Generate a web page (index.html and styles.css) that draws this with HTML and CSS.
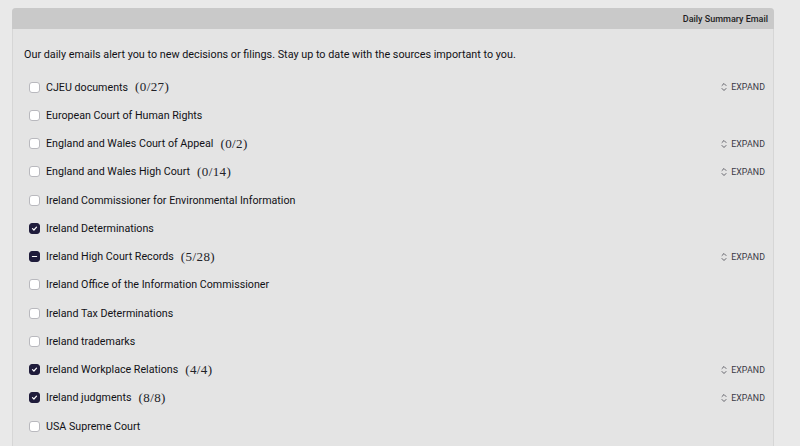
FILE: index.html
```html
<!DOCTYPE html>
<html lang="en">
<head>
<meta charset="utf-8">
<title>Daily Summary Email</title>
<link rel="stylesheet" href="styles.css">
</head>
<body>
<section class="panel">
  <header class="panel-head">Daily Summary Email</header>
  <div class="panel-body">
    <p class="intro">Our daily emails alert you to new decisions or filings. Stay up to date with the sources important to you.</p>
    <ul class="sources">
      <li class="row"><span class="box"></span><span class="label">CJEU documents</span><span class="count">(0/27)</span><span class="expand"><svg viewBox="0 0 6 10" class="sel"><path d="M1 3.5 L3 1.5 L5 3.5 M1 6.5 L3 8.5 L5 6.5"/></svg>EXPAND</span></li>
      <li class="row"><span class="box"></span><span class="label">European Court of Human Rights</span></li>
      <li class="row"><span class="box"></span><span class="label">England and Wales Court of Appeal</span><span class="count">(0/2)</span><span class="expand"><svg viewBox="0 0 6 10" class="sel"><path d="M1 3.5 L3 1.5 L5 3.5 M1 6.5 L3 8.5 L5 6.5"/></svg>EXPAND</span></li>
      <li class="row"><span class="box"></span><span class="label">England and Wales High Court</span><span class="count">(0/14)</span><span class="expand"><svg viewBox="0 0 6 10" class="sel"><path d="M1 3.5 L3 1.5 L5 3.5 M1 6.5 L3 8.5 L5 6.5"/></svg>EXPAND</span></li>
      <li class="row"><span class="box"></span><span class="label">Ireland Commissioner for Environmental Information</span></li>
      <li class="row"><span class="box checked"><svg viewBox="0 0 12 12"><path d="M3.3 6.2 L5.2 8 L8.7 4.2"/></svg></span><span class="label">Ireland Determinations</span></li>
      <li class="row"><span class="box checked"><svg viewBox="0 0 12 12"><path d="M3.2 6 L8.8 6"/></svg></span><span class="label">Ireland High Court Records</span><span class="count">(5/28)</span><span class="expand"><svg viewBox="0 0 6 10" class="sel"><path d="M1 3.5 L3 1.5 L5 3.5 M1 6.5 L3 8.5 L5 6.5"/></svg>EXPAND</span></li>
      <li class="row"><span class="box"></span><span class="label">Ireland Office of the Information Commissioner</span></li>
      <li class="row"><span class="box"></span><span class="label">Ireland Tax Determinations</span></li>
      <li class="row"><span class="box"></span><span class="label">Ireland trademarks</span></li>
      <li class="row"><span class="box checked"><svg viewBox="0 0 12 12"><path d="M3.3 6.2 L5.2 8 L8.7 4.2"/></svg></span><span class="label">Ireland Workplace Relations</span><span class="count">(4/4)</span><span class="expand"><svg viewBox="0 0 6 10" class="sel"><path d="M1 3.5 L3 1.5 L5 3.5 M1 6.5 L3 8.5 L5 6.5"/></svg>EXPAND</span></li>
      <li class="row"><span class="box checked"><svg viewBox="0 0 12 12"><path d="M3.3 6.2 L5.2 8 L8.7 4.2"/></svg></span><span class="label">Ireland judgments</span><span class="count">(8/8)</span><span class="expand"><svg viewBox="0 0 6 10" class="sel"><path d="M1 3.5 L3 1.5 L5 3.5 M1 6.5 L3 8.5 L5 6.5"/></svg>EXPAND</span></li>
      <li class="row"><span class="box"></span><span class="label">USA Supreme Court</span></li>
    </ul>
  </div>
</section>
</body>
</html>
```

FILE: styles.css
```css
html, body {
  margin: 0;
  padding: 0;
  background: #e9e9e9;
}
body {
  padding: 8px 26px 0 12px;
  font-family: Roboto, "Noto Sans", "Liberation Sans", sans-serif;
  color: #111116;
  overflow: hidden;
  height: 446px;
  box-sizing: border-box;
}
.panel {
  border-radius: 4px 4px 0 0;
  background: #e4e4e4;
  border: 1px solid #d6d6d6;
  border-top: none;
  height: 460px;
}
.panel-head {
  height: 21px;
  background: #c9c9c9;
  border-radius: 4px 4px 0 0;
  margin: 0 -1px;
  display: flex;
  align-items: center;
  justify-content: flex-end;
  padding-right: 6px;
  font-size: 9px;
  font-weight: 500;
  color: #1f1f24;
}
.panel-body {
  padding: 18px 8px 0 11px;
}
.intro {
  margin: 0 0 11px 0;
  font-size: 10.8px;
  line-height: 15px;
}
.sources {
  list-style: none;
  margin: 0;
  padding: 0 0 0 5px;
}
.row {
  height: 28.25px;
  display: flex;
  align-items: center;
  font-size: 10.7px;
}
.box {
  width: 11px;
  height: 11px;
  border: 1px solid #b9b9be;
  background: #ffffff;
  border-radius: 3px;
  box-sizing: border-box;
  margin-right: 6px;
  flex: none;
  display: flex;
  align-items: center;
  justify-content: center;
}
.box.checked {
  background: #1f1c3b;
  border-color: #1f1c3b;
}
.box svg {
  width: 11px;
  height: 11px;
  fill: none;
  stroke: #ffffff;
  stroke-width: 1.6;
  stroke-linecap: round;
  stroke-linejoin: round;
}
.label {
  white-space: nowrap;
}
.count {
  margin-left: 7px;
  font-family: "Liberation Serif", "DejaVu Serif", serif;
  font-size: 13px;
  letter-spacing: 0.4px;
  color: #222228;
}
.expand {
  margin-left: auto;
  display: flex;
  align-items: center;
  font-size: 8.8px;
  color: #3a3a44;
  letter-spacing: 0.1px;
}
.sel {
  width: 6px;
  height: 10px;
  margin-right: 4px;
  fill: none;
  stroke: #55555e;
  stroke-width: 0.9;
  stroke-linecap: round;
  stroke-linejoin: round;
}
```
